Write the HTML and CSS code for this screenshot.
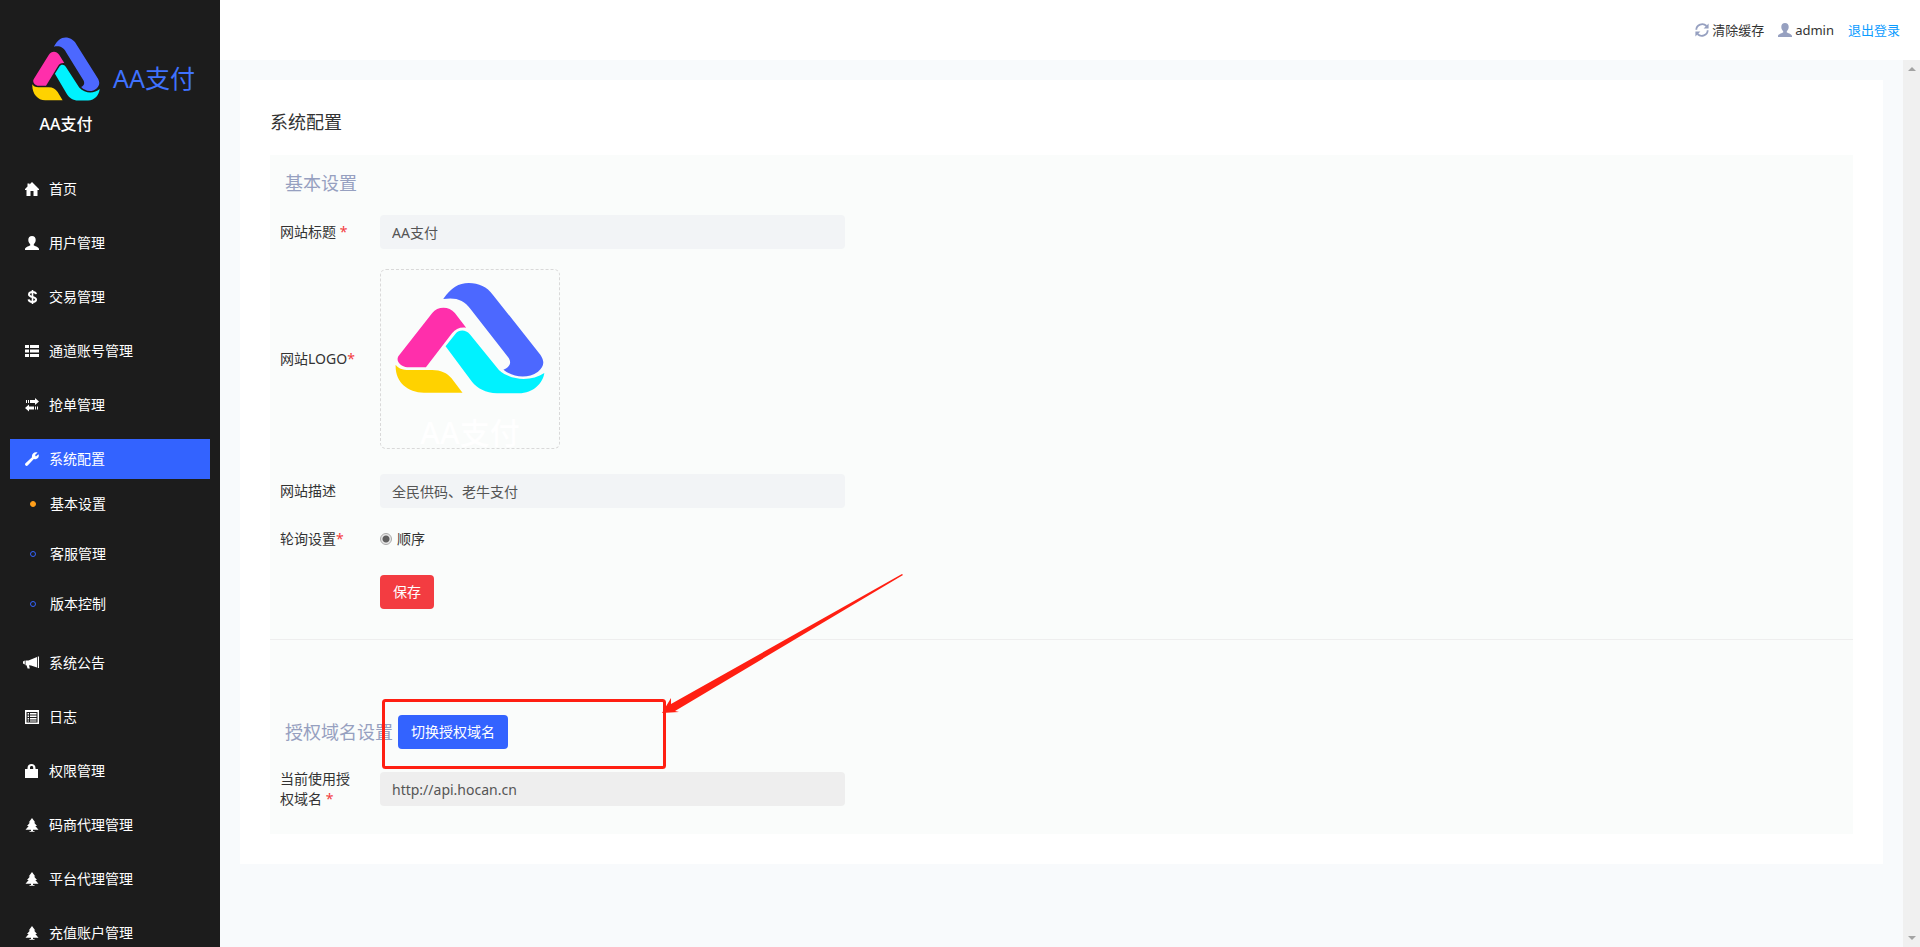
FILE: index.html
```html
<!DOCTYPE html>
<html lang="zh-CN">
<head>
<meta charset="utf-8">
<title>系统配置 - AA支付</title>
<link rel="stylesheet" href="styles.css">
</head>
<body>
<svg class="defs" aria-hidden="true">
  <symbol id="logo" viewBox="403 97 451 336" preserveAspectRatio="none">
    <path fill="#4c68ff" d="M548 148C572 114 594 100 625 100C655 100 680 112 697 135L840 315C855 337 850 352 833 366C800 390 755 382 729 360C748 352 754 340 745 325L630 178C610 150 585 142 548 148Z"/>
    <path fill="#ff2fab" d="M515 190C530 170 565 168 583 190L617 234C597 232 585 238 575 250L496 353H440C418 350 402 332 416 316Z"/>
    <path fill="#00f2ff" d="M555 290L585 252C595 240 615 238 628 254L716 362C755 395 815 395 852 370C848 400 820 430 775 431H710C675 430 650 415 635 397Z"/>
    <path fill="#ffd200" d="M405 345C412 355 425 361 445 361H515C540 361 560 370 573 386L606 429H490C440 429 402 395 405 345Z"/>
  </symbol>
  <symbol id="home" viewBox="0 0 14 14"><path d="M7 0L14.500 7.500V8H12.500V14H8.500V9H5.500V14H1.500V8H-0.500V7.500L2.500 4.500V1.500H4.500V2.500Z"/></symbol>
  <symbol id="user" viewBox="0 0 14 14"><path d="M7 0C9.3 0 10.7 1.7 10.7 3.8C10.7 5.8 10 7.3 8.8 8.2V9.4C11 10.2 14 11.2 14 13V14H0V13C0 11.2 3 10.2 5.2 9.4V8.2C4 7.3 3.3 5.8 3.3 3.8C3.3 1.7 4.7 0 7 0Z"/></symbol>
  <symbol id="usd" viewBox="0 0 14 14"><path fill="none" stroke="currentColor" stroke-width="2" d="M11 4.2C10.8 2.6 9.3 2.1 7.5 2.1C5.4 2.1 4 2.9 4 4.4C4 7.8 11.1 6.1 11.1 9.6C11.1 11.3 9.4 12 7.5 12C5.3 12 3.8 11.3 3.6 9.4"/><path d="M6.7 0H8.3V14H6.7Z"/></symbol>
  <symbol id="list" viewBox="0 0 14 14"><path d="M0 1H4V4H0ZM5 1H14V4H5ZM0 5.5H4V8.5H0ZM5 5.5H14V8.5H5ZM0 10H4V13H0ZM5 10H14V13H5Z"/></symbol>
  <symbol id="transfer" viewBox="0 0 14 14"><path d="M1 2H2V5H1ZM3 2H4V5H3ZM5 2H10V0L14 3.500L10 7V5H5ZM13 8.500H12V11.500H13ZM11 8.500H10V11.500H11ZM9 8.500H4V6.500L0 10L4 13.500V11.500H9Z"/></symbol>
  <symbol id="wrench" viewBox="0 0 14 14"><path d="M12.600 0.500L10 3L10.900 4.600L13.500 2.300C14.600 4.900 12.800 7.600 10 7.200L8.800 7L2.700 13.500C1.900 14.200 0.900 14 0.400 13.300C-0.200 12.600 0 11.800 0.500 11.300L7 5.200C6.300 2 9.200 -0.700 12.600 0.500Z"/></symbol>
  <symbol id="horn" viewBox="0 0 16 14"><path d="M14.800 0.500H16V12H14.800ZM14 1V11.500L8 9.500L6 9.300L6.800 12.500H4.600L3.500 9.200H2.500V4.500H5.500ZM1.800 4.500V8.500L0 7.500V5.500Z"/></symbol>
  <symbol id="listalt" viewBox="0 0 14 14"><path fill-rule="evenodd" d="M0 0H14V14H0ZM1.500 2V12.500H12.500V2ZM2.600 3H4V4.500H2.600ZM5 3H11.500V4.500H5ZM2.600 5.500H4V7H2.600ZM5 5.500H11.500V7H5ZM2.600 8H4V9.500H2.600ZM5 8H11.500V9.500H5ZM2.600 10.500H4V11.600H2.600ZM5 10.500H11.500V11.600H5Z"/></symbol>
  <symbol id="lock" viewBox="0 0 14 14"><path fill-rule="evenodd" d="M2.500 5V4C2.500 1.300 4.300 0 6.500 0S10.500 1.300 10.500 4V5H13V14H0V5ZM5 5H8.200V3.700C8.200 2.500 7.600 2 6.600 2S5 2.500 5 3.700Z"/></symbol>
  <symbol id="tree" viewBox="0 0 14 14"><path d="M7 0L10.300 4.500H9L12 8H10.300L13.500 11.800H8V13H9.500V13.800H4.500V13H6V11.800H0.500L3.700 8H2L5 4.500H3.700Z"/></symbol>
  <symbol id="refresh" viewBox="0 0 14 14"><path fill="none" stroke="currentColor" stroke-width="1.800" d="M1.300 6.700C1.400 1.800 7.800 -0.800 11.500 3M12.700 7.300C12.600 12.200 6.200 14.800 2.500 11"/><path d="M13.600 0.400V5.400H8.600ZM0.400 13.600V8.600H5.400Z"/></symbol>
</svg>

<aside class="sidebar">
  <a class="brand" href="#">
    <span class="brand-mark">
      <svg class="brand-logo" aria-hidden="true"><use href="#logo"/></svg>
      <span class="brand-caption">AA支付</span>
    </span>
    <span class="brand-name">AA支付</span>
  </a>
  <nav class="menu">
    <a class="menu-item" href="#"><svg class="icon"><use href="#home"/></svg>首页</a>
    <a class="menu-item" href="#"><svg class="icon"><use href="#user"/></svg>用户管理</a>
    <a class="menu-item" href="#"><svg class="icon"><use href="#usd"/></svg>交易管理</a>
    <a class="menu-item" href="#"><svg class="icon"><use href="#list"/></svg>通道账号管理</a>
    <a class="menu-item" href="#"><svg class="icon"><use href="#transfer"/></svg>抢单管理</a>
    <div class="menu-group">
      <a class="menu-item active" href="#"><svg class="icon"><use href="#wrench"/></svg>系统配置</a>
      <a class="sub-item current" href="#">基本设置</a>
      <a class="sub-item" href="#">客服管理</a>
      <a class="sub-item" href="#">版本控制</a>
    </div>
    <a class="menu-item" href="#"><svg class="icon icon-wide"><use href="#horn"/></svg>系统公告</a>
    <a class="menu-item" href="#"><svg class="icon"><use href="#listalt"/></svg>日志</a>
    <a class="menu-item" href="#"><svg class="icon"><use href="#lock"/></svg>权限管理</a>
    <a class="menu-item" href="#"><svg class="icon"><use href="#tree"/></svg>码商代理管理</a>
    <a class="menu-item" href="#"><svg class="icon"><use href="#tree"/></svg>平台代理管理</a>
    <a class="menu-item" href="#"><svg class="icon"><use href="#tree"/></svg>充值账户管理</a>
  </nav>
</aside>

<div class="page">
  <header class="topbar">
    <a class="top-link" href="#"><svg class="icon"><use href="#refresh"/></svg>清除缓存</a>
    <a class="top-link" href="#"><svg class="icon"><use href="#user"/></svg>admin</a>
    <a class="top-link logout" href="#">退出登录</a>
  </header>
  <div class="body">
    <main class="content">
      <div class="card">
        <h1 class="card-title">系统配置</h1>
        <div class="panel">
          <form class="section">
            <h2 class="section-title">基本设置</h2>
            <div class="row">
              <label class="label" for="site-title">网站标题 <span class="req">*</span></label>
              <input class="input" id="site-title" type="text" value="AA支付">
            </div>
            <div class="row row-logo">
              <span class="label">网站LOGO<span class="req">*</span></span>
              <div class="upload">
                <svg class="upload-logo" role="img" aria-label="AA支付"><use href="#logo"/></svg>
                <span class="upload-caption">AA支付</span>
              </div>
            </div>
            <div class="row">
              <label class="label" for="site-desc">网站描述</label>
              <input class="input" id="site-desc" type="text" value="全民供码、老牛支付">
            </div>
            <div class="row row-radio">
              <span class="label">轮询设置<span class="req">*</span></span>
              <label class="choice"><input class="radio" type="radio" name="polling" checked>顺序</label>
            </div>
            <div class="actions"><button class="btn btn-save" type="button">保存</button></div>
          </form>
          <form class="section section-domain">
            <div class="section-head">
              <h2 class="head-title">授权域名设置</h2>
              <button class="btn btn-switch" type="button">切换授权域名</button>
            </div>
            <div class="row">
              <label class="label" for="domain">当前使用授权域名 <span class="req">*</span></label>
              <input class="input" id="domain" type="text" value="http://api.hocan.cn" readonly>
            </div>
            <svg class="callout" viewBox="0 0 522 198" aria-hidden="true">
              <rect x="1.500" y="127.500" width="281" height="67" rx="2" fill="none" stroke="#ff1f12" stroke-width="3"/>
              <path fill="#ff1f12" d="M280 140L289 125L289 131L520 1L521 2L293 138L297 139Z"/>
            </svg>
          </form>
        </div>
      </div>
    </main>
    <div class="scroll-track" aria-hidden="true">
      <span class="arrow arrow-up"></span>
      <span class="arrow arrow-down"></span>
    </div>
  </div>
</div>
</body>
</html>
```

FILE: styles.css
```css
*,
*::before {
  box-sizing: border-box;
}

body {
  display: flex;
  height: 100vh;
  margin: 0;
  overflow: hidden;
  color: #333;
  background: #f8fafc;
  font: 14px/20px "Noto Sans", "Noto Sans CJK SC", sans-serif;
}

a {
  color: inherit;
  text-decoration: none;
}

h1,
h2 {
  margin: 0;
  font-size: 18px;
  font-weight: 400;
}

.defs {
  position: absolute;
  width: 0;
  height: 0;
}

.icon {
  flex: none;
  width: 14px;
  height: 14px;
  overflow: visible;
  fill: currentColor;
}

.icon-wide {
  width: 16px;
  margin-left: -2px;
}

/* Sidebar */
.sidebar {
  flex: none;
  width: 220px;
  overflow: hidden;
  color: #fff;
  background: #1c1c1c;
}

.brand {
  display: flex;
  gap: 13px;
  height: 168px;
  padding: 37px 0 0 32px;
}

.brand-mark {
  display: flex;
  flex-direction: column;
  align-items: center;
  gap: 13px;
}

.brand-logo {
  width: 68px;
  height: 64px;
}

.brand-caption {
  font-size: 16px;
  font-weight: 500;
  line-height: 20px;
}

.brand-name {
  padding-top: 23px;
  color: #3f72ff;
  font-size: 25px;
  line-height: 36px;
}

.menu {
  display: flex;
  flex-direction: column;
  gap: 14px;
  padding: 1px 10px 0;
}

.menu-item {
  display: flex;
  align-items: center;
  gap: 10px;
  height: 40px;
  padding-left: 15px;
}

.menu-item.active {
  background: #3363ff;
}

.sub-item {
  display: flex;
  align-items: center;
  gap: 14px;
  height: 50px;
  padding-left: 20px;
}

.sub-item::before {
  width: 6px;
  height: 6px;
  border: 1px solid #3363ff;
  border-radius: 50%;
  content: "";
}

.sub-item.current::before {
  border-color: #ff9f1a;
  background: #ff9f1a;
}

/* Top bar */
.page {
  display: flex;
  flex: 1;
  flex-direction: column;
  min-width: 0;
}

.topbar {
  display: flex;
  flex: none;
  align-items: center;
  justify-content: flex-end;
  gap: 14px;
  height: 60px;
  padding-right: 20px;
  background: #fff;
  font-size: 13px;
}

.top-link {
  display: flex;
  align-items: center;
  gap: 3px;
}

.top-link .icon {
  color: #96a0c0;
}

.logout {
  color: #0a9bff;
}

/* Content */
.body {
  display: flex;
  flex: 1;
  min-height: 0;
}

.content {
  flex: 1;
  min-width: 0;
  padding: 20px;
}

.card {
  padding: 30px;
  background: #fff;
}

.card-title {
  margin-bottom: 20px;
  line-height: 25px;
}

.panel {
  background: #fafcfb;
}

.section {
  padding: 0 10px 30px;
}

.section-title {
  padding: 13px 5px 17px;
  color: #96a0c0;
  line-height: 30px;
}

.row {
  display: grid;
  grid-template-columns: 80px minmax(0, 465px);
  gap: 20px;
  align-items: center;
  margin-bottom: 20px;
}

.row-logo {
  margin-bottom: 25px;
}

.row-radio {
  margin-bottom: 25px;
  min-height: 22px;
}

.req {
  color: #f33c41;
}

.input {
  width: 100%;
  height: 34px;
  padding: 0 12px;
  border: 0;
  border-radius: 4px;
  color: #555;
  background: #f2f4f6;
  font: inherit;
}

.input[readonly] {
  background: #eee;
}

.upload {
  display: flex;
  flex-direction: column;
  align-items: center;
  gap: 24px;
  width: 180px;
  height: 180px;
  padding-top: 12px;
  overflow: hidden;
  border: 1px dashed #d9d9d9;
  border-radius: 6px;
}

.upload-logo {
  flex: none;
  width: 150px;
  height: 112px;
}

.upload-caption {
  color: #fff;
  font-size: 30px;
  font-weight: 500;
  line-height: 30px;
}

.choice {
  display: flex;
  align-items: center;
  gap: 5px;
}

.radio {
  width: 12px;
  height: 12px;
  margin: 0;
  border: 1px solid #aaa;
  border-radius: 50%;
  appearance: none;
  background: radial-gradient(circle, #606060 3px, #e8e8e8 4px);
}

.actions {
  padding-left: 100px;
}

.btn {
  height: 34px;
  padding: 0 13px;
  border: 0;
  border-radius: 4px;
  color: #fff;
  font: inherit;
}

.btn-save {
  background: #f33c41;
}

.btn-switch {
  background: #3363ff;
}

.section-domain {
  position: relative;
  padding-top: 75px;
  padding-bottom: 5px;
  border-top: 1px solid #eee;
}

.section-head {
  display: flex;
  align-items: center;
  gap: 5px;
  padding-left: 5px;
  margin-bottom: 20px;
}

.head-title {
  color: #96a0c0;
}

.callout {
  position: absolute;
  top: -67px;
  left: 112px;
  width: 522px;
  height: 198px;
  pointer-events: none;
}

/* Scroll track */
.scroll-track {
  display: flex;
  flex: none;
  flex-direction: column;
  align-items: center;
  justify-content: space-between;
  width: 17px;
  padding: 7px 0;
  background: #f0f0f0;
}

.arrow {
  border: 4px solid transparent;
}

.arrow-up {
  border-top: 0;
  border-bottom-color: #a3a3a3;
}

.arrow-down {
  border-bottom: 0;
  border-top-color: #a3a3a3;
}
```
